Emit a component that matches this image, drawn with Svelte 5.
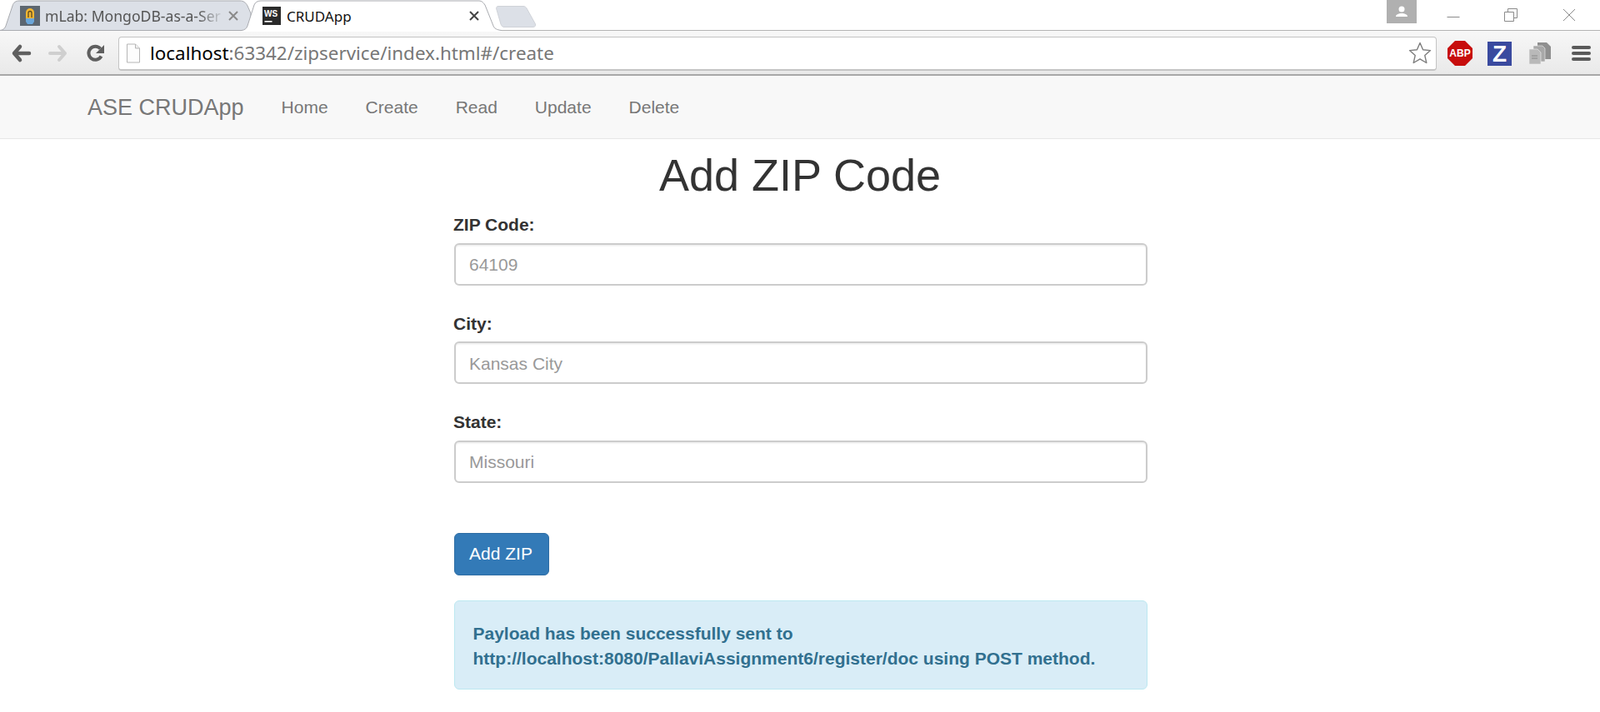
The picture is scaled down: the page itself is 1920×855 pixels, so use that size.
<script lang="ts">
  const navLinks = ["Home", "Create", "Read", "Update", "Delete"];
  const fields = [
    { label: "ZIP Code:", placeholder: "64109" },
    { label: "City:", placeholder: "Kansas City" },
    { label: "State:", placeholder: "Missouri" },
  ];
</script>

<div class="browser">
  <div class="tabstrip">
    <div class="tab inactive">
      <svg class="tab-bg" width="302" height="37" viewBox="0 0 302 37">
        <path d="M0 36.500C4 36 6 34 7 31L15 7C16 3 19 1 23 1H288C292 1 295 3 297 7L301 16V36.500Z" fill="#dce0e7" stroke="#a9abb0" />
      </svg>
      <svg class="favicon" viewBox="0 0 24 24" width="24" height="24">
        <rect width="24" height="24" fill="#5c6670" />
        <path d="M7 15V8a5 5 0 0 1 10 0v7Z" fill="#f2b632" />
        <path d="M7 15h10v4l-2 3H9l-2-3Z" fill="#6ba6d9" />
        <path d="M10 14V8.500a2 2 0 0 1 4 0V14" fill="none" stroke="#5c4a20" stroke-width="1.300" />
      </svg>
      <span class="tab-title muted">mLab: MongoDB-as-a-Ser</span>
      <svg class="tab-close" width="12" height="12" viewBox="0 0 12 12">
        <path d="M1 1L11 11M11 1L1 11" stroke="#8a8a8a" stroke-width="2" />
      </svg>
    </div>
    <div class="tab active">
      <svg class="tab-bg" width="312" height="38" viewBox="0 0 312 38">
        <path d="M0 36.500C4 36 6 34 7 31L15 6C16 3 19 1 23 1H285C288 1 290 3 292 6L302 31C303 34 306 36 312 36.500V38H0Z" fill="#fff" />
        <path d="M0 36.500C4 36 6 34 7 31L15 6C16 3 19 1 23 1H285C288 1 290 3 292 6L302 31C303 34 306 36 312 36.500" fill="none" stroke="#a9abb0" />
      </svg>
      <svg class="favicon ws" viewBox="0 0 22 22" width="22" height="22">
        <rect width="22" height="22" fill="#2b2b2b" />
        <text x="2" y="12" class="ws-text">WS</text>
        <rect x="2.500" y="17" width="9" height="1.600" fill="#fff" />
      </svg>
      <span class="tab-title">CRUDApp</span>
      <svg class="tab-close last" width="12" height="12" viewBox="0 0 12 12">
        <path d="M1 1L11 11M11 1L1 11" stroke="#444" stroke-width="2" />
      </svg>
    </div>
    <svg class="newtab" width="50" height="26" viewBox="0 0 50 26">
      <path d="M3 .5H33C35 .5 36 1.500 37 3L47 21C48.500 24 47 25.500 44 25.500H10C8 25.500 7 24.500 6 22L.8 4C.2 2 1 .5 3 .5Z" fill="#dce0e7" stroke="#cfd2d8" />
    </svg>
    <div class="spacer"></div>
    <div class="profile">
      <svg width="18" height="14" viewBox="0 0 18 14"><circle cx="9" cy="4" r="3.500" fill="#fff" /><path d="M2 13c0-3 4-4 7-4s7 1 7 4Z" fill="#fff" /></svg>
    </div>
    <div class="winctl">
      <svg width="16" height="16" viewBox="0 0 16 16"><path d="M0.500 10.500H15.500" stroke="#8a8a8a" /></svg>
    </div>
    <div class="winctl">
      <svg width="16" height="16" viewBox="0 0 16 16"><path d="M0.500 4.500H11.500V15.500H0.500ZM4.500 4V0.500H15.500V11.500H12" fill="none" stroke="#8a8a8a" /></svg>
    </div>
    <div class="winctl last">
      <svg width="16" height="16" viewBox="0 0 16 16"><path d="M1 1L15 15M15 1L1 15" stroke="#8a8a8a" /></svg>
    </div>
  </div>

  <div class="toolbar">
    <svg class="tool" width="28" height="24" viewBox="0 0 28 24">
      <path d="M13 4L6 12L13 20M6 12H24" fill="none" stroke="#5f5f5f" stroke-width="4.500" stroke-linecap="round" stroke-linejoin="round" />
    </svg>
    <svg class="tool fwd" width="28" height="24" viewBox="0 0 28 24">
      <path d="M15 4L22 12L15 20M22 12H4" fill="none" stroke="#cfcfcf" stroke-width="4" stroke-linecap="round" stroke-linejoin="round" />
    </svg>
    <svg class="tool reload" width="24" height="24" viewBox="0 0 24 24">
      <path d="M18.500 15.500A8 8 0 1 1 17.500 6.500" fill="none" stroke="#5f5f5f" stroke-width="4" />
      <path d="M22 2V12H12Z" fill="#5f5f5f" />
    </svg>
    <div class="omnibox">
      <svg width="18" height="24" viewBox="0 0 18 24">
        <path d="M1.500 1H11.500L16.500 6V23H1.500Z" fill="#fdfdfd" stroke="#b5b5b5" />
        <path d="M11.500 1V6H16.500" fill="#eee" stroke="#b5b5b5" />
      </svg>
      <span class="url"><span class="host">localhost</span>:63342/zipservice/index.html#/create</span>
      <svg class="star" width="28" height="27" viewBox="0 0 28 27">
        <path d="M14 1.500L17.600 9.800 26.500 10.600 19.800 16.600 21.800 25.500 14 20.800 6.200 25.500 8.200 16.600 1.500 10.600 10.400 9.800Z" fill="#fff" stroke="#7d7d7d" stroke-width="1.400" stroke-linejoin="round" />
      </svg>
    </div>
    <div class="ext abp">ABP</div>
    <div class="ext zbox">Z</div>
    <svg class="docs" width="28" height="28" viewBox="0 0 28 28">
      <path d="M11 1H22L27 6V21H11Z" fill="#8f8f8f" />
      <path d="M6 5H17L20 8V24H6Z" fill="#a8a8a8" stroke="#eee" stroke-width="0.600" />
      <path d="M1 9H11L15 13V27H1Z" fill="#b9b9b9" stroke="#eee" stroke-width="0.600" />
      <path d="M4 17H11M4 20H11" stroke="#888" />
    </svg>
    <div class="menu"><i></i><i></i><i></i></div>
  </div>
</div>

<nav class="navbar">
  <span class="brand">ASE CRUDApp</span>
  {#each navLinks as link}
    <span class="nav-link">{link}</span>
  {/each}
</nav>

<main class="page">
  <h1>Add ZIP Code</h1>
  <form class="form">
    {#each fields as field}
      <div class="group">
        <label>
          <span class="label">{field.label}</span>
          <input type="text" placeholder={field.placeholder} />
        </label>
      </div>
    {/each}
    <button type="button" class="btn">Add ZIP</button>
    <div class="alert">
      Payload has been successfully sent to<br />
      http://localhost:8080/PallaviAssignment6/register/doc using POST method.
    </div>
  </form>
</main>

<style>
  :global(body) {
    margin: 0;
    background: #fff;
    font-family: "Liberation Sans", Arial, sans-serif;
    color: #333;
    overflow: hidden;
  }

  .browser {
    height: 91px;
    box-sizing: border-box;
    border-bottom: 2px solid #a8a8a8;
    background: #fff;
  }

  .tabstrip {
    display: flex;
    height: 36px;
    align-items: flex-start;
    position: relative;
    z-index: 1;
  }

  .tab {
    position: relative;
    height: 36px;
    display: flex;
    align-items: center;
    flex: none;
    font-family: "Noto Sans", "Open Sans", sans-serif;
  }

  .tab.inactive {
    width: 290px;
    font-size: 17.600px;
  }

  .tab.active {
    width: 305px;
    font-size: 17px;
  }

  .tab-bg {
    position: absolute;
    left: 0;
    top: 0;
  }

  .favicon {
    position: relative;
    margin-left: 24px;
    margin-top: 2px;
    flex: none;
  }

  .favicon.ws {
    margin-left: 25px;
  }

  .ws-text {
    font: bold 10px "Liberation Sans", sans-serif;
    fill: #fff;
  }

  .tab-title {
    position: relative;
    margin-left: 6px;
    padding-top: 2px;
    white-space: nowrap;
    color: #111;
    flex: 1;
  }

  .active .tab-title {
    margin-left: 7px;
  }

  .tab-title.muted {
    color: #555;
    mask-image: linear-gradient(to right, #000 85%, rgba(0, 0, 0, 0.15) 98%);
  }

  .tab-close {
    position: relative;
    margin: 2px 4px 0 5px;
    flex: none;
  }

  .tab-close.last {
    margin-right: 20px;
  }

  .newtab {
    margin-top: 7px;
    flex: none;
  }

  .spacer {
    flex: 1;
  }

  .profile {
    width: 36px;
    height: 28px;
    background: #b0b0b0;
    display: flex;
    align-items: center;
    justify-content: center;
    margin-right: 36px;
    flex: none;
  }

  .winctl {
    width: 16px;
    height: 16px;
    margin-top: 10px;
    margin-right: 53px;
    flex: none;
  }

  .winctl:nth-of-type(6) {
    margin-right: 54px;
  }

  .winctl.last {
    margin-right: 29px;
  }

  .toolbar {
    height: 53px;
    box-sizing: border-box;
    display: flex;
    align-items: center;
    background: linear-gradient(#f7f7f7, #e9e9e9);
    border-top: 1px solid #b4b4b4;
    padding: 3px 0 1px 11px;
  }

  .tool {
    flex: none;
  }

  .fwd {
    margin-left: 17px;
  }

  .reload {
    margin-left: 19px;
  }

  .omnibox {
    margin-left: 15px;
    width: 1582px;
    height: 41px;
    box-sizing: border-box;
    border: 1px solid #c4c4c4;
    border-bottom-width: 2px;
    border-radius: 4px;
    background: #fff;
    display: flex;
    align-items: center;
    padding-left: 8px;
    flex: none;
  }

  .url {
    margin-left: 11px;
    font-family: "Noto Sans", "Open Sans", sans-serif;
    font-size: 22.400px;
    color: #777;
    white-space: nowrap;
    flex: 1;
  }

  .host {
    color: #000;
  }

  .star {
    margin-right: 5px;
  }

  .ext {
    flex: none;
  }

  .abp {
    margin-left: 13px;
    width: 30px;
    height: 30px;
    background: #c70d0c;
    clip-path: polygon(30% 0, 70% 0, 100% 30%, 100% 70%, 70% 100%, 30% 100%, 0 70%, 0 30%);
    color: #fff;
    font-size: 12px;
    font-weight: bold;
    line-height: 30px;
    text-align: center;
  }

  .zbox {
    margin-left: 18px;
    width: 29px;
    height: 29px;
    background: #3a4a9f;
    color: #fff;
    font-size: 28px;
    font-weight: bold;
    line-height: 29px;
    text-align: center;
  }

  .docs {
    margin-left: 20px;
    flex: none;
  }

  .menu {
    margin-left: 24px;
    width: 23px;
    display: flex;
    flex-direction: column;
    gap: 3px;
    flex: none;
  }

  .menu i {
    display: block;
    height: 4px;
    border-radius: 2px;
    background: #5a5a5a;
  }

  .navbar {
    height: 76px;
    box-sizing: border-box;
    background: #f8f8f8;
    border-bottom: 1.500px solid #e7e7e7;
    display: flex;
    align-items: center;
    padding: 1px 0 0 105px;
    color: #777;
    font-size: 21px;
  }

  .brand {
    font-size: 27px;
    margin-right: 45px;
  }

  .nav-link {
    margin-right: 45px;
  }

  .page {
    width: 834px;
    margin-left: 544px;
  }

  h1 {
    margin: 14px 2px 0 0;
    font-size: 54px;
    font-weight: 500;
    line-height: 59px;
    text-align: center;
    color: #333;
  }

  .form {
    margin-top: 14px;
  }

  .group {
    margin-bottom: 30px;
  }

  .label {
    display: block;
    font-size: 21px;
    font-weight: bold;
    line-height: 30px;
    padding-top: 1px;
    margin-bottom: 6.500px;
  }

  input {
    display: block;
    width: 832px;
    height: 51px;
    margin-left: 1px;
    box-sizing: border-box;
    border: 2px solid #ccc;
    border-radius: 6px;
    padding: 2px 16px 0;
    font: 21px "Liberation Sans", Arial, sans-serif;
    color: #555;
    box-shadow: inset 0 1.500px 1.500px rgba(0, 0, 0, 0.075);
  }

  input::placeholder {
    color: #999;
  }

  .btn {
    display: block;
    margin: 60px 0 0 1px;
    height: 51px;
    width: 114px;
    box-sizing: border-box;
    padding: 0 2px 0 0;
    background: #337ab7;
    border: 1.500px solid #2e6da4;
    border-radius: 6px;
    color: #fff;
    font: 21px "Liberation Sans", Arial, sans-serif;
  }

  .alert {
    margin: 30px 0 0 1px;
    width: 832px;
    box-sizing: border-box;
    height: 107px;
    padding: 24.500px 21.500px 0;
    background: #d9edf7;
    border: 1.500px solid #bce8f1;
    border-radius: 6px;
    color: #31708f;
    font-size: 21px;
    font-weight: bold;
    line-height: 30px;
  }
</style>
